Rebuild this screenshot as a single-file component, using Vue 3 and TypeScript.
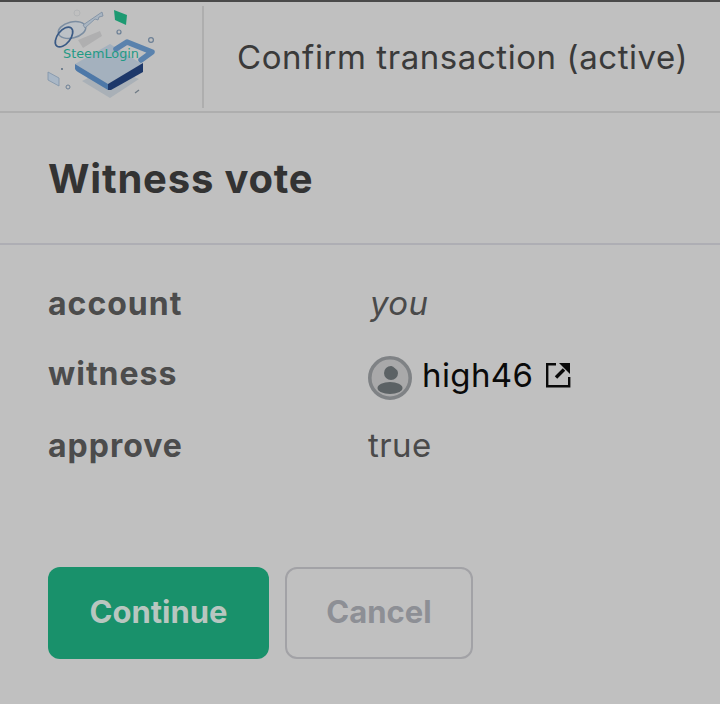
<script setup lang="ts">
interface Row { label: string; kind: 'you' | 'user' | 'plain'; value: string }
const rows: Row[] = [
  { label: 'account', kind: 'you', value: 'you' },
  { label: 'witness', kind: 'user', value: 'high46' },
  { label: 'approve', kind: 'plain', value: 'true' },
]
</script>

<template>
  <div class="page">
    <header class="header">
      <div class="logo-cell">
        <svg class="logo" width="202" height="102" viewBox="0 2 202 102" aria-label="SteemLogin">
          <path d="M78 36 L100 27 L102 32 L83 44 Z" fill="#afafb0" />
          <path d="M82 77 L110 63 L139 75 L110 94 Z" fill="#a9b0b7" />
          <path d="M75 60 L110 40 L142 60 L108 80 Z" fill="#a4b1be" />
          <path d="M75 60 L75 65 Q76 67 78 68 L108 86 L108 80 Z" fill="#4d78a8" />
          <path d="M108 80 L143 59 L143 68 L111 86 L108 86 Z" fill="#1d386a" />
          <path d="M116 45 L127 38 L152 48 L141 56" fill="none" stroke="#5a82ad" stroke-width="5.5" stroke-linejoin="round" stroke-linecap="round" />
          <ellipse cx="72" cy="26" rx="14" ry="8" transform="rotate(-14 72 26)" fill="#bcc1c6" stroke="#7b8da1" stroke-width="1.5" />
          <ellipse cx="64" cy="33" rx="6.5" ry="11.5" transform="rotate(38 64 33)" fill="none" stroke="#3a5a85" stroke-width="1.7" />
          <path d="M83 21 L102 8 L103 12 L99 13 L98 16 L95 15 L85 24 Z" fill="#a9b5c1" stroke="#7b8da1" stroke-width="0.8" />
          <path d="M114 6 L127 11 L126 21 L115 16 Z" fill="#1d9a72" />
          <circle cx="77" cy="9" r="3" fill="none" stroke="#b2b4b6" stroke-width="1" />
          <circle cx="119" cy="28" r="2" fill="none" stroke="#6b7f95" stroke-width="1.2" />
          <circle cx="151" cy="36" r="2.4" fill="none" stroke="#6b7f95" stroke-width="1.2" />
          <circle cx="68" cy="83" r="2" fill="none" stroke="#6b7f95" stroke-width="1" />
          <circle cx="62" cy="65" r="0.9" fill="#4c6178" />
          <path d="M48 68 L59 74 L59 82 L48 76 Z" fill="#a9b7c6" stroke="#7f93a8" stroke-width="0.8" />
          <path d="M135 89 L139 86" stroke="#6f7a85" stroke-width="1.3" />
          <text x="63" y="54" textLength="76" lengthAdjust="spacingAndGlyphs" class="logo-text">SteemLogin</text>
        </svg>
      </div>
      <h1 class="app-title">Confirm transaction (active)</h1>
    </header>

    <section class="op-head">
      <h2 class="op-title">Witness vote</h2>
    </section>

    <section class="details">
      <div v-for="row in rows" :key="row.label" class="row">
        <span class="key">{{ row.label }}</span>
        <em v-if="row.kind === 'you'" class="val you">{{ row.value }}</em>
        <span v-else-if="row.kind === 'user'" class="val user">
          <svg class="avatar" width="44" height="44" viewBox="0 0 44 44">
            <circle cx="22" cy="22" r="20.2" fill="#a9a9aa" stroke="#7f8285" stroke-width="3.6" />
            <circle cx="23" cy="17" r="7" fill="#5c6265" />
            <path d="M24 10 Q29 10 30 15 Q27 12 24 10 Z" fill="#a9a9aa" />
            <ellipse cx="22" cy="32" rx="12.5" ry="6" fill="#5c6265" />
          </svg>
          <span class="name">{{ row.value }}</span>
          <svg class="ext" width="26" height="26" viewBox="0 0 26 26">
            <path d="M11 2.2 H2.2 V24.2 H24.2 V15" fill="none" stroke="#0a0a0a" stroke-width="2.4" />
            <path d="M14 1 H25 V12 Z" fill="#0a0a0a" />
            <path d="M11 15.5 L19 7.5" stroke="#0a0a0a" stroke-width="3.4" />
          </svg>
        </span>
        <span v-else class="val">{{ row.value }}</span>
      </div>
    </section>

    <div class="actions">
      <button class="btn primary">Continue</button>
      <button class="btn ghost">Cancel</button>
    </div>
  </div>
</template>

<style>
html, body { margin: 0; background: #c0c0c0; }
</style>

<style scoped>
.page {
  width: 720px;
  height: 704px;
  box-sizing: border-box;
  overflow: hidden;
  background: #c0c0c0;
  font-family: Inter, "Liberation Sans", sans-serif;
  color: #333;
  border-top: 2px solid #4a4a4a;
}
.header {
  display: flex;
  align-items: center;
  height: 111px;
  box-sizing: border-box;
  border-bottom: 2px solid #aeaeae;
}
.logo-cell {
  width: 204px;
  height: 102px;
  box-sizing: border-box;
  border-right: 2px solid #aeaeae;
  flex: none;
}
.logo { display: block; }
.logo-text {
  font-family: "DejaVu Sans", sans-serif;
  font-size: 13px;
  fill: #1f9a85;
}
.app-title {
  margin: 0 0 0 33px;
  font-size: 33px;
  letter-spacing: 0.57px;
  font-weight: 400;
  color: #3a3a3a;
  white-space: nowrap;
}
.op-head {
  height: 132px;
  box-sizing: border-box;
  display: flex;
  align-items: center;
  padding-left: 48px;
  border-bottom: 2px solid #aeaeb4;
}
.op-title {
  margin: 0;
  font-size: 40px;
  letter-spacing: 0.8px;
  font-weight: 700;
  color: #333;
}
.details {
  padding: 23px 48px 0;
  display: flex;
  flex-direction: column;
}
.row {
  display: flex;
  align-items: center;
  height: 70px;
  box-sizing: border-box;
}
.row:last-child { padding-top: 4px; }
.key {
  width: 320px;
  font-size: 32px;
  letter-spacing: 1px;
  font-weight: 700;
  color: #4c4c4c;
}
.val {
  font-size: 33px;
  letter-spacing: 0.4px;
  color: #4a4a4a;
}
.you { font-style: italic; margin-left: 2px; }
.user {
  display: flex;
  align-items: center;
  color: #0a0a0a;
}
.avatar { margin-top: 10px; }
.name { margin: 3px 0 0 10px; }
.ext { margin: 3px 0 0 12px; }
.actions {
  display: flex;
  gap: 16px;
  margin: 89px 0 0 48px;
}
.btn {
  height: 92px;
  box-sizing: border-box;
  border-radius: 12px;
  font-family: inherit;
  font-size: 31px;
  font-weight: 700;
  padding: 0 0 4px;
}
.primary {
  width: 221px;
  background: #19916b;
  border: 0;
  color: #b8c6c0;
}
.ghost {
  width: 188px;
  background: transparent;
  border: 2px solid #a2a2a6;
  color: #8d8f95;
}
</style>
